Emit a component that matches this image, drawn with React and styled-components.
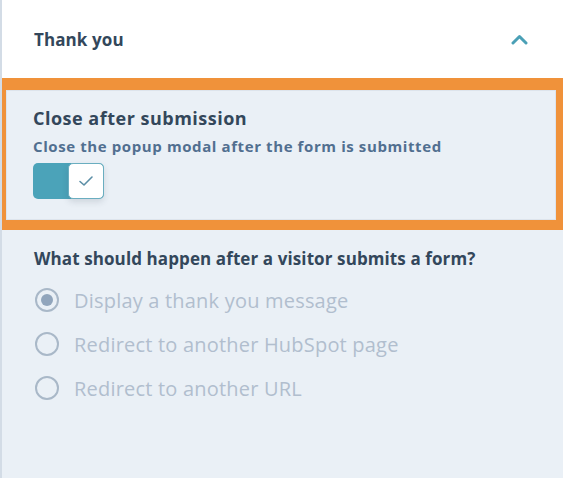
import React from "react";
import styled, { createGlobalStyle } from "styled-components";

const Global = createGlobalStyle`
  html, body { margin: 0; padding: 0; background: #eaf0f6; }
  body { font-family: "Open Sans", Lato, sans-serif; }
  * { box-sizing: border-box; }
`;

const Page = styled.div`
  width: 563px;
  height: 478px;
  background: #eaf0f6;
  border-left: 2px solid #d3dce6;
  display: flex;
  flex-direction: column;
  overflow: hidden;
`;

const Header = styled.div`
  height: 78px;
  background: #ffffff;
  display: flex;
  align-items: center;
  justify-content: space-between;
  padding: 0 35px 0 32px;
`;

const HeaderTitle = styled.h2`
  margin: 0;
  font-size: 17px;
  font-weight: 700;
  color: #33475b;
  letter-spacing: 0.1px;
`;

const Highlight = styled.div`
  border-style: solid;
  border-color: #f0923a;
  border-width: 12px 7px 10px 6px;
  margin-left: -2px;
`;

const HighlightInner = styled.div`
  background: #eaf0f6;
  border: 1px solid #dde4ec;
  padding: 16px 20px 20px 26px;
  display: flex;
  flex-direction: column;
`;

const Title = styled.div`
  font-size: 18px;
  font-weight: 700;
  color: #33475b;
  line-height: 22px;
  letter-spacing: 0.5px;
`;

const Subtitle = styled.div`
  font-size: 15px;
  font-weight: 700;
  color: #516f90;
  line-height: 20px;
  margin-top: 7px;
  letter-spacing: 0.6px;
`;

const Toggle = styled.div`
  margin-top: 7px;
  width: 71px;
  height: 36px;
  border-radius: 5px;
  background: #4ba3b9;
  display: flex;
  justify-content: flex-end;
`;

const Knob = styled.div`
  width: 36px;
  height: 36px;
  background: #ffffff;
  border: 1px solid #6aaec0;
  border-radius: 5px;
  display: flex;
  align-items: center;
  justify-content: center;
  box-shadow: 0 3px 6px rgba(45, 62, 80, 0.15);
`;

const Section = styled.div`
  padding: 17px 20px 0 32px;
  display: flex;
  flex-direction: column;
`;

const Question = styled.div`
  font-size: 17px;
  font-weight: 700;
  color: #33475b;
  line-height: 24px;
  letter-spacing: 0.1px;
`;

const RadioList = styled.div`
  margin-top: 15px;
  display: flex;
  flex-direction: column;
  gap: 16px;
`;

const RadioRow = styled.label`
  display: flex;
  align-items: center;
  gap: 15px;
  height: 28px;
  padding-left: 1px;
`;

const RadioCircle = styled.span`
  width: 24px;
  height: 24px;
  border-radius: 50%;
  border: 2px solid #a9b8c8;
  display: flex;
  align-items: center;
  justify-content: center;
  flex-shrink: 0;
`;

const RadioDot = styled.span`
  width: 12px;
  height: 12px;
  border-radius: 50%;
  background: #91a5bc;
`;

const RadioText = styled.span`
  font-size: 20px;
  color: #b1bece;
  letter-spacing: 0.2px;
`;

const Chevron = () => (
  <svg width="17" height="11" viewBox="0 0 17 11" fill="none">
    <path d="M2 9 L8.5 2.5 L15 9" stroke="#4aa0b6" strokeWidth="3" strokeLinecap="round" strokeLinejoin="round" />
  </svg>
);

const Check = () => (
  <svg width="16" height="12" viewBox="0 0 16 12" fill="none">
    <path d="M2 6.5 L6 10 L14 2" stroke="#5b8ea6" strokeWidth="1.6" strokeLinecap="round" strokeLinejoin="round" />
  </svg>
);

const options = [
  { label: "Display a thank you message", checked: true },
  { label: "Redirect to another HubSpot page", checked: false },
  { label: "Redirect to another URL", checked: false },
];

export default function App() {
  return (
    <>
      <Global />
      <Page>
        <Header>
          <HeaderTitle>Thank you</HeaderTitle>
          <Chevron />
        </Header>
        <Highlight>
          <HighlightInner>
            <Title>Close after submission</Title>
            <Subtitle>Close the popup modal after the form is submitted</Subtitle>
            <Toggle>
              <Knob>
                <Check />
              </Knob>
            </Toggle>
          </HighlightInner>
        </Highlight>
        <Section>
          <Question>What should happen after a visitor submits a form?</Question>
          <RadioList>
            {options.map((o) => (
              <RadioRow key={o.label}>
                <RadioCircle>{o.checked && <RadioDot />}</RadioCircle>
                <RadioText>{o.label}</RadioText>
              </RadioRow>
            ))}
          </RadioList>
        </Section>
      </Page>
    </>
  );
}
